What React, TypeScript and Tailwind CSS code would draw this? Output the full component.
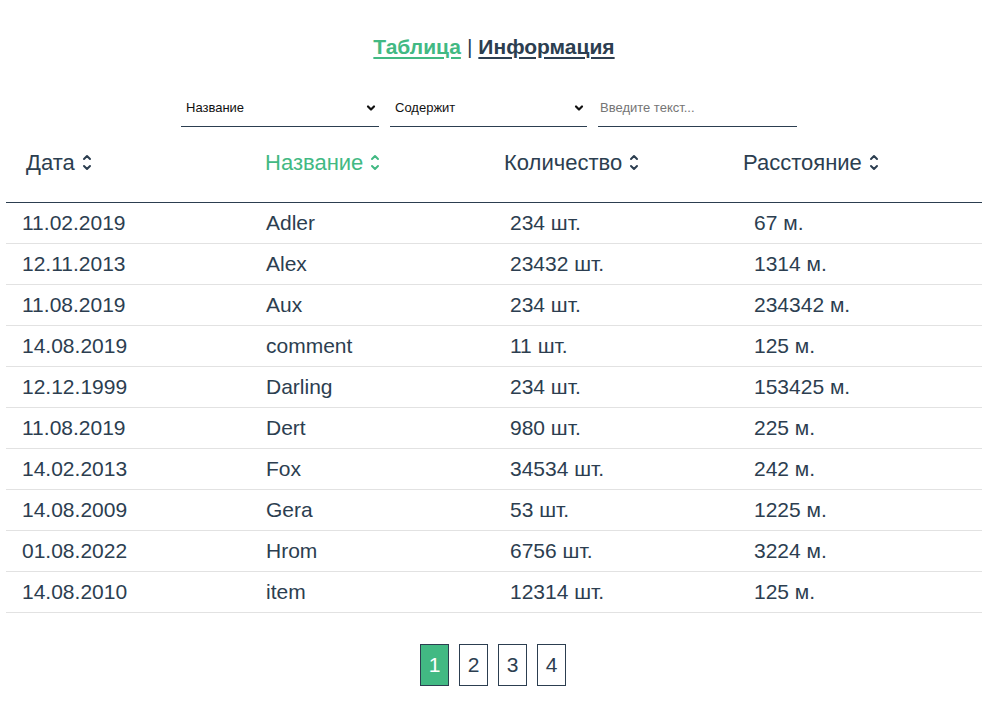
import { useState } from 'react';

interface Row { date: string; name: string; qty: string; dist: string; }

const ROWS: Row[] = [
  { date: '11.02.2019', name: 'Adler', qty: '234 шт.', dist: '67 м.' },
  { date: '12.11.2013', name: 'Alex', qty: '23432 шт.', dist: '1314 м.' },
  { date: '11.08.2019', name: 'Aux', qty: '234 шт.', dist: '234342 м.' },
  { date: '14.08.2019', name: 'comment', qty: '11 шт.', dist: '125 м.' },
  { date: '12.12.1999', name: 'Darling', qty: '234 шт.', dist: '153425 м.' },
  { date: '11.08.2019', name: 'Dert', qty: '980 шт.', dist: '225 м.' },
  { date: '14.02.2013', name: 'Fox', qty: '34534 шт.', dist: '242 м.' },
  { date: '14.08.2009', name: 'Gera', qty: '53 шт.', dist: '1225 м.' },
  { date: '01.08.2022', name: 'Hrom', qty: '6756 шт.', dist: '3224 м.' },
  { date: '14.08.2010', name: 'item', qty: '12314 шт.', dist: '125 м.' },
];

const COLS = ['Дата', 'Название', 'Количество', 'Расстояние'];

function SortIcon() {
  return (
    <svg width="10" height="19" viewBox="0 0 10 19" fill="none" stroke="currentColor" strokeWidth="2" strokeLinecap="round" strokeLinejoin="round">
      <path d="M2 6 L5 3 L8 6" />
      <path d="M2 13 L5 16 L8 13" />
    </svg>
  );
}

function Chevron() {
  return (
    <svg width="10" height="8" viewBox="0 0 10 8" fill="none" stroke="#111" strokeWidth="2.2" strokeLinecap="round" strokeLinejoin="round">
      <path d="M2 2.5 L5 5.5 L8 2.5" />
    </svg>
  );
}

export default function App() {
  const [page, setPage] = useState(1);
  const sortCol = 1;

  return (
    <div className="min-h-screen bg-white text-[#2c3e50]" style={{ fontFamily: '"Liberation Sans", Arial, sans-serif' }}>
      <div className="px-[6px] pt-[34px]">
        {/* Tabs */}
        <div className="flex justify-center pr-[2px] text-[21px] leading-[26px]">
          <a href="#" className="font-bold text-[#42b983] underline underline-offset-[3px]">Таблица</a>
          <span className="px-[6px] text-[#2c3e50]">|</span>
          <a href="#" className="font-bold text-[#2c3e50] underline underline-offset-[3px]">Информация</a>
        </div>

        {/* Filters */}
        <div className="flex justify-center gap-[11px] pr-[12px] mt-[36px]">
          <div className="w-[198px] h-[31px] border-b border-[#2c3e50] flex items-center justify-between pl-[5px] pr-[3px] pb-[6px] text-[13px] text-[#111]">
            <span>Название</span>
            <Chevron />
          </div>
          <div className="w-[197px] h-[31px] border-b border-[#2c3e50] flex items-center justify-between pl-[5px] pr-[3px] pb-[6px] text-[13px] text-[#111]">
            <span>Содержит</span>
            <Chevron />
          </div>
          <div className="w-[199px] h-[31px] border-b border-[#2c3e50] flex items-center pl-[2px] pb-[6px] text-[13px] text-[#757575]">
            <span>Введите текст...</span>
          </div>
        </div>

        {/* Table */}
        <div className="w-[976px]">
          <div className="grid grid-cols-[239px_239px_239px_239px] pl-[20px] h-[76px] items-center pb-[4px] border-b border-[#2c3e50] text-[22px]">
            {COLS.map((c, i) => (
              <div key={c} className={`flex items-center gap-[7px] ${i === sortCol ? 'text-[#42b983]' : 'text-[#2c3e50]'}`}>
                <span>{c}</span>
                <SortIcon />
              </div>
            ))}
          </div>
          {ROWS.map((r, i) => (
            <div key={i} className="grid grid-cols-4 h-[41px] items-center border-b border-[#e2e2e2] text-[21px] text-[#2c3e50]">
              <div className="pl-[16px]">{r.date}</div>
              <div className="pl-[16px]">{r.name}</div>
              <div className="pl-[16px]">{r.qty}</div>
              <div className="pl-[16px]">{r.dist}</div>
            </div>
          ))}
        </div>

        {/* Pagination */}
        <div className="flex justify-center gap-[10px] pr-[4px] mt-[31px] pb-[32px]">
          {[1, 2, 3, 4].map((n) => (
            <button
              key={n}
              type="button"
              onClick={() => setPage(n)}
              className={`w-[29px] h-[42px] border border-[#2c3e50] text-[21px] flex items-center justify-center ${
                page === n ? 'bg-[#42b983] text-white' : 'bg-white text-[#2c3e50]'
              }`}
            >
              {n}
            </button>
          ))}
        </div>
      </div>
    </div>
  );
}
